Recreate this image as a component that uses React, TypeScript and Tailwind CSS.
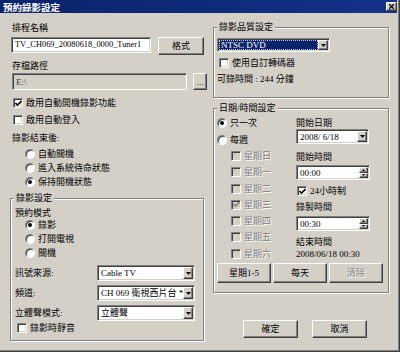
import React from "react";

const sunken =
  "border border-t-[#808080] border-l-[#808080] border-b-white border-r-white shadow-[inset_1px_1px_0_#404040,inset_-1px_-1px_0_#d4d0c8]";
const raised =
  "border border-t-white border-l-white border-b-[#404040] border-r-[#404040] shadow-[inset_-1px_-1px_0_#808080] bg-[#d4d0c8]";
const etched = "border border-[#808080] shadow-[inset_1px_1px_0_#ffffff,1px_1px_0_#ffffff]";
const disabledText = "text-[#808080] [text-shadow:1px_1px_0_#ffffff]";

function Check({ checked = false, disabled = false }: { checked?: boolean; disabled?: boolean }) {
  return (
    <div
      className={`${sunken} w-[10px] h-[10px] shrink-0 flex items-center justify-center ${
        disabled ? "bg-[#d4d0c8]" : "bg-white"
      }`}
    >
      {checked && (
        <svg width="7" height="7" viewBox="0 0 7 7">
          <path d="M0.5 3 L2.5 5 L6.5 1" fill="none" stroke={disabled ? "#808080" : "#000"} strokeWidth="1.6" />
        </svg>
      )}
    </div>
  );
}

function CheckRow({
  label,
  checked,
  disabled,
  className = "",
}: {
  label: string;
  checked?: boolean;
  disabled?: boolean;
  className?: string;
}) {
  return (
    <div className={`flex items-center gap-[3px] h-[12px] ${className}`}>
      <Check checked={checked} disabled={disabled} />
      <span className={disabled ? disabledText : ""}>{label}</span>
    </div>
  );
}

function Radio({ label, on = false, className = "" }: { label: string; on?: boolean; className?: string }) {
  return (
    <div className={`flex items-center gap-[3px] h-[12px] ${className}`}>
      <div className="w-[10px] h-[10px] shrink-0 rounded-full border border-t-[#808080] border-l-[#808080] border-b-white border-r-white bg-white flex items-center justify-center shadow-[inset_1px_1px_0_#404040]">
        {on && <div className="w-[4px] h-[4px] rounded-full bg-black" />}
      </div>
      <span>{label}</span>
    </div>
  );
}

function DropBtn() {
  return (
    <div className={`${raised} w-[10px] h-full shrink-0 flex items-center justify-center`}>
      <svg width="5" height="3" viewBox="0 0 5 3">
        <path d="M0 0 H5 L2.5 3 Z" fill="#000" />
      </svg>
    </div>
  );
}

function Combo({ text, className = "" }: { text: string; className?: string }) {
  return (
    <div className={`${sunken} bg-white flex items-stretch p-px ${className}`}>
      <div className="flex-1 pl-[2px] flex items-center whitespace-nowrap overflow-hidden">{text}</div>
      <DropBtn />
    </div>
  );
}

function Spin({ text }: { text: string }) {
  return (
    <div className={`${sunken} bg-white flex items-stretch p-px w-[74px] h-[15px]`}>
      <div className="flex-1 pl-[2px] flex items-center">{text}</div>
      <div className="w-[9px] flex flex-col shrink-0">
        <div className={`${raised} flex-1 flex items-center justify-center`}>
          <svg width="3" height="2" viewBox="0 0 3 2">
            <path d="M0 2 H3 L1.5 0 Z" fill="#000" />
          </svg>
        </div>
        <div className={`${raised} flex-1 flex items-center justify-center`}>
          <svg width="3" height="2" viewBox="0 0 3 2">
            <path d="M0 0 H3 L1.5 2 Z" fill="#000" />
          </svg>
        </div>
      </div>
    </div>
  );
}

function Button({
  label,
  className = "",
  disabled = false,
}: {
  label: string;
  className?: string;
  disabled?: boolean;
}) {
  return (
    <div className={`${raised} flex items-center justify-center ${className}`}>
      <span className={disabled ? disabledText : ""}>{label}</span>
    </div>
  );
}

function Legend({ text }: { text: string }) {
  return <div className="-mt-[7px] ml-[3px] px-[2px] w-fit h-[12px] bg-[#d4d0c8]">{text}</div>;
}

export default function App() {
  return (
    <div className="w-[400px] h-[352px] bg-[#d4d0c8] border-r border-b border-[#404040] font-['Liberation_Serif','Noto_Sans_CJK_TC',serif] text-[9px] leading-[12px] text-black overflow-hidden">
      <div className="h-full border-r border-b border-[#808080] pr-px flex flex-col">
        {/* Title bar */}
        <div className="h-[13px] shrink-0 bg-gradient-to-r from-[#0a246a] to-[#13338a] flex items-center pl-[3px]">
          <span className="text-white font-bold text-[9.5px] font-['Noto_Sans_CJK_TC',sans-serif]">預約錄影設定</span>
          <div className={`${raised} ml-auto w-[11px] h-[9px] flex items-center justify-center`}>
            <svg width="5" height="5" viewBox="0 0 5 5">
              <path d="M0 0 L5 5 M5 0 L0 5" stroke="#000" strokeWidth="1.3" />
            </svg>
          </div>
        </div>

        {/* Body */}
        <div className="flex pl-[10px]">
          {/* Left column */}
          <div className="w-[197px] shrink-0 flex flex-col">
            <div className="mt-[9px] ml-[2px]">排程名稱</div>
            <div className="mt-[3px] flex items-start">
              <div className={`${sunken} bg-white ml-[1px] w-[140px] h-[16px] pl-[3px] flex items-center whitespace-nowrap overflow-hidden text-[8.4px]`}>
                TV_CH069_20080618_0000_Tuner1
              </div>
              <Button label="格式" className="ml-[7px] w-[46px] h-[18px]" />
            </div>
            <div className="mt-[5px] ml-[2px]">存檔路徑</div>
            <div className="mt-[1px] flex items-start">
              <div className={`${sunken} bg-[#d4d0c8] ml-[2px] w-[175px] h-[17px] px-[3px] flex items-center text-[#404040]`}>
                E:\
              </div>
              <Button label="..." className="ml-[6px] w-[14px] h-[17px]" />
            </div>
            <CheckRow className="mt-[7px] ml-[3px]" label="啟用自動開機錄影功能" checked />
            <CheckRow className="mt-[5px] ml-[3px]" label="啟用自動登入" />
            <div className="mt-[6px] ml-[2px]">錄影結束後:</div>
            <div className="mt-[4px] ml-[15px] flex flex-col gap-[2px]">
              <Radio label="自動關機" />
              <Radio label="進入系統待命狀態" />
              <Radio label="保持開機狀態" on />
            </div>

            {/* 錄影設定 group */}
            <div className={`${etched} mt-[10px] w-[194px] flex flex-col pb-[6px]`}>
              <Legend text="錄影設定" />
              <div className="mt-[3px] ml-[4px]">預約模式</div>
              <div className="ml-[14px] flex flex-col gap-[2px]">
                <Radio label="錄影" on />
                <Radio label="打開電視" />
                <Radio label="關機" />
              </div>
              <div className="mt-[6px] flex items-center">
                <div className="w-[86px] pl-[4px]">訊號來源:</div>
                <Combo text="Cable TV" className="w-[98px] h-[16px]" />
              </div>
              <div className="mt-[4px] flex items-center">
                <div className="w-[86px] pl-[4px]">頻道:</div>
                <Combo text="CH 069  衛視西片台 *" className="w-[98px] h-[16px]" />
              </div>
              <div className="mt-[4px] flex items-center">
                <div className="w-[86px] pl-[4px]">立體聲模式:</div>
                <Combo text="立體聲" className="w-[98px] h-[16px]" />
              </div>
              <CheckRow className="mt-[1px] ml-[6px]" label="錄影時靜音" />
            </div>
          </div>

          {/* Right column */}
          <div className="ml-[6px] w-[176px] shrink-0 flex flex-col">
            <div className={`${etched} mt-[14px] h-[71px] flex flex-col`}>
              <Legend text="錄影品質設定" />
              <div className={`${sunken} bg-white mt-[5px] ml-[3px] w-[113px] h-[14px] flex items-stretch p-px`}>
                <div className="flex-1 bg-[#0a246a] text-white border border-dotted border-[#c8c8ff] pl-[1px] flex items-center leading-[10px]">
                  NTSC DVD
                </div>
                <DropBtn />
              </div>
              <CheckRow className="mt-[5px] ml-[5px]" label="使用自訂轉碼器" />
              <div className="mt-[4px] ml-[3px]">可錄時間 : 244 分鐘</div>
            </div>

            <div className={`${etched} mt-[10px] h-[185px] flex flex-col`}>
              <Legend text="日期/時間設定" />
              <div className="flex">
                <div className="w-[82px] shrink-0 flex flex-col mt-[3px]">
                  <Radio className="ml-[3px]" label="只一次" on />
                  <Radio className="ml-[3px] mt-[5px]" label="每週" />
                  <div className="mt-[4px] ml-[17px] flex flex-col gap-[4.3px]">
                    <CheckRow label="星期日" disabled />
                    <CheckRow label="星期一" disabled />
                    <CheckRow label="星期二" disabled />
                    <CheckRow label="星期三" disabled checked />
                    <CheckRow label="星期四" disabled />
                    <CheckRow label="星期五" disabled />
                    <CheckRow label="星期六" disabled />
                  </div>
                </div>
                <div className="flex flex-col mt-[3px]">
                  <div>開始日期</div>
                  <Combo text="2008/ 6/18" className="w-[73px] h-[15px]" />
                  <div className="mt-[7px]">開始時間</div>
                  <div className="mt-[2px]">
                    <Spin text="00:00" />
                  </div>
                  <CheckRow className="mt-[5px] ml-[1px]" label="24小時制" checked />
                  <div className="mt-[4px]">錄製時間</div>
                  <div className="mt-[3px]">
                    <Spin text="00:30" />
                  </div>
                  <div className="mt-[5px]">結束時間</div>
                  <div>2008/06/18 00:30</div>
                </div>
              </div>
              <div className="mt-[3px] ml-[3px] flex gap-[2px]">
                <Button label="星期1-5" className="w-[54px] h-[20px]" />
                <Button label="每天" className="w-[54px] h-[20px]" />
                <Button label="清除" className="w-[54px] h-[20px]" disabled />
              </div>
            </div>

            <div className="mt-[27px] ml-[30px] flex gap-[14px]">
              <Button label="確定" className="w-[55px] h-[18px]" />
              <Button label="取消" className="w-[55px] h-[18px]" />
            </div>
          </div>
        </div>
      </div>
    </div>
  );
}
